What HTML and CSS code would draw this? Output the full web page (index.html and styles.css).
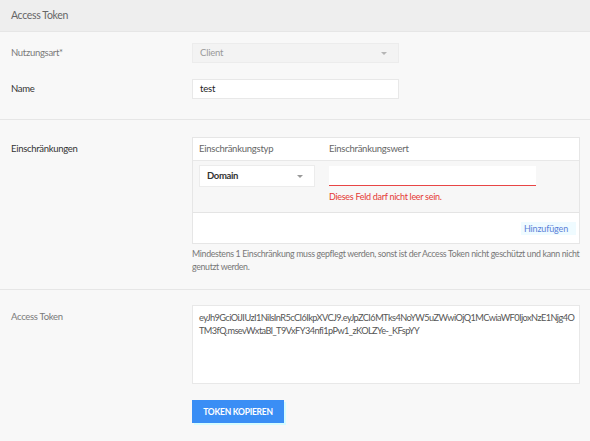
FILE: index.html
```html
<!DOCTYPE html>
<html lang="de">
<head>
<meta charset="utf-8">
<title>Access Token</title>
<link rel="stylesheet" href="styles.css">
</head>
<body>
<header class="panel-head">Access Token</header>
<main class="panel-body">
  <section class="group group-first">
    <div class="row row-usage">
      <label class="lbl lbl-muted">Nutzungsart*</label>
      <div class="field">
        <div class="select select-disabled"><span>Client</span><i class="caret"></i></div>
      </div>
    </div>
    <div class="row row-name">
      <label class="lbl">Name</label>
      <div class="field">
        <div class="input input-name">test</div>
      </div>
    </div>
  </section>

  <section class="group group-restrict">
    <div class="row">
      <label class="lbl lbl-restrict">Einschränkungen</label>
      <div class="field field-wide">
        <div class="rtable">
          <div class="rhead">
            <span class="col-type">Einschränkungstyp</span>
            <span class="col-value">Einschränkungswert</span>
          </div>
          <div class="rrow">
            <div class="col-type">
              <div class="select select-domain"><span>Domain</span><i class="caret caret-dark"></i></div>
            </div>
            <div class="col-value">
              <div class="input input-error"></div>
              <div class="err">Dieses Feld darf nicht leer sein.</div>
            </div>
          </div>
          <div class="rfoot"><a class="add">Hinzufügen</a></div>
        </div>
        <p class="help">Mindestens 1 Einschränkung muss gepflegt werden, sonst ist der Access Token nicht geschützt und kann nicht genutzt werden.</p>
      </div>
    </div>
  </section>

  <section class="group group-token">
    <div class="row">
      <label class="lbl lbl-muted lbl-token">Access Token</label>
      <div class="field field-wide">
        <div class="token">eyJh9GciOiJIUzI1NiIsInR5cCI6IkpXVCJ9.eyJpZCI6MTks4NoYW5uZWwiOjQ1MCwiaWF0IjoxNzE1Njg4OTM3fQ.msevWxtaBl_T9VxFY34nfi1pPw1_zKOLZYe-_KFspYY</div>
        <button class="btn">TOKEN KOPIEREN</button>
      </div>
    </div>
  </section>
</main>
</body>
</html>
```
FILE: styles.css
```css
* { box-sizing: border-box; }
html, body { margin: 0; padding: 0; }
body {
  width: 590px;
  height: 441px;
  overflow: hidden;
  background: #f8f8f8;
  font-family: "Source Sans Pro", Lato, "Open Sans", sans-serif;
  color: #333;
}
.panel-head {
  height: 32px;
  background: #eeeeee;
  border-bottom: 1px solid #e6e6e6;
  padding-left: 11px;
  line-height: 31px;
  font-size: 10.5px;
  letter-spacing: -0.35px;
  color: #666;
}
.group { border-bottom: 1px solid #e6e6e6; }
.group-first { padding: 11px 0 20px; }
.group-restrict { padding: 17px 0 16px; }
.group-token { padding: 15px 0 20px; border-bottom: none; }
.row {
  display: grid;
  grid-template-columns: 192px 1fr;
  padding-right: 10px;
}
.row-name { margin-top: 16px; }
.lbl {
  padding-left: 11px;
  font-size: 9.5px;
  letter-spacing: -0.3px;
  line-height: 20px;
  color: #333;
}
.lbl-muted { color: #7a7a7a; }
.lbl-restrict { line-height: 23px; }
.lbl-token { line-height: 24px; }
.field { width: 207px; }
.field-wide { width: auto; }
.select, .input {
  height: 20px;
  border: 1px solid #e8e8e8;
  background: #fff;
  font-size: 9.5px;
  letter-spacing: -0.2px;
  line-height: 18px;
  padding-left: 7px;
  position: relative;
}
.select-disabled { background: #f3f3f3; color: #999; border-color: #ececec; }
.input-name { color: #222; }
.caret {
  position: absolute;
  right: 11px;
  top: 8px;
  width: 0; height: 0;
  border-left: 3px solid transparent;
  border-right: 3px solid transparent;
  border-top: 3px solid #b5b5b5;
}
.caret-dark { border-top-color: #999; right: 11px; border-left-width: 3.5px; border-right-width: 3.5px; border-top-width: 3.5px; top: 9px; }
.rtable {
  border: 1px solid #e6e6e6;
  background: #fff;
}
.rhead {
  display: flex;
  height: 23px;
  border-bottom: 1px solid #e8e8e8;
  font-size: 9.5px;
  letter-spacing: -0.25px;
  line-height: 22px;
  color: #666;
}
.col-type { width: 136px; padding-left: 6px; }
.col-value { flex: 1; }
.rrow {
  display: flex;
  background: #f7f7f7;
  height: 52px;
  padding-top: 4px;
  border-bottom: 1px solid #e4e4e4;
}
.select-domain {
  width: 116px;
  height: 22px;
  line-height: 20px;
  color: #333;
  font-weight: 700;
  letter-spacing: -0.35px;
  border-color: #ececec;
}
.input-error {
  width: 207px;
  margin-top: 1px;
  height: 20px;
  border: none;
  border-bottom: 1px solid #e84545;
}
.err {
  margin-top: 5px;
  font-size: 9px;
  letter-spacing: -0.3px;
  line-height: 12px;
  color: #e53935;
}
.rfoot {
  height: 30px;
  display: flex;
  justify-content: flex-end;
  align-items: center;
  padding-right: 3px;
}
.add {
  font-size: 9px;
  letter-spacing: -0.15px;
  color: #5a7fd8;
  background: #effbff;
  padding: 0 8px 0 3px;
  line-height: 13px;
}
.help {
  margin: 3px 0 0;
  font-size: 8.8px;
  letter-spacing: -0.33px;
  line-height: 13px;
  color: #777;
}
.token {
  height: 79px;
  border: 1px solid #e8e8e8;
  background: #fff;
  padding: 5px 1px 5px 6px;
  font-size: 9.2px;
  letter-spacing: -0.56px;
  line-height: 13px;
  color: #555;
  word-break: break-all;
}
.btn {
  margin-top: 16px;
  display: block;
  width: 92px;
  height: 23px;
  border: none;
  padding: 0;
  background: #3a8ef5;
  color: #fff;
  font-family: inherit;
  font-weight: 700;
  font-size: 8.5px;
  letter-spacing: -0.25px;
  box-shadow: 2px 2px 0 #d6fdff;
}
```
